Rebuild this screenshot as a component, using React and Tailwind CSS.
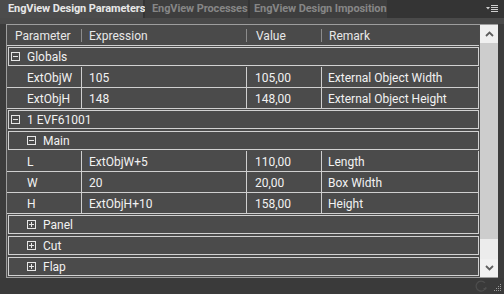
import React from "react";

const font = { fontFamily: 'Roboto, "Noto Sans", sans-serif' };

function BoxIcon({ plus }) {
  return (
    <svg width="9" height="9" viewBox="0 0 9 9" className="shrink-0">
      <rect x="0.5" y="0.5" width="8" height="8" fill="none" stroke="#e6e6e6" strokeWidth="1" />
      <line x1="2" y1="4.5" x2="7" y2="4.5" stroke="#e6e6e6" strokeWidth="1" />
      {plus && <line x1="4.5" y1="2" x2="4.5" y2="7" stroke="#e6e6e6" strokeWidth="1" />}
    </svg>
  );
}

function GroupRow({ label, level, plus }) {
  return (
    <div className="h-[21px] pt-px pl-px">
      <div
        className={`h-[19px] border border-[#d2d2d2] flex items-center gap-[7px] ${level ? "pl-[18px]" : "pl-[2px]"}`}
      >
        <BoxIcon plus={plus} />
        <span className="text-[12px] leading-none text-[#f2f2f2] pt-px">{label}</span>
      </div>
    </div>
  );
}

function DataRow({ p, e, v, r }) {
  const cell = "h-full border-r border-b border-[#cfcfcf] flex items-center pt-px text-[12px] text-[#f2f2f2] leading-none";
  return (
    <div className="h-[21px] flex">
      <div className={`${cell} w-[75px] pl-[20px]`}>{p}</div>
      <div className={`${cell} w-[165px] pl-[7px]`}>{e}</div>
      <div className={`${cell} w-[75px] pl-[8px]`}>{v}</div>
      <div className={`${cell} w-[157px] pl-[6px]`}>{r}</div>
    </div>
  );
}

export default function App() {
  return (
    <div className="w-[504px] h-[294px] bg-[#3b3b3b] flex flex-col overflow-hidden" style={font}>
      {/* Tab strip */}
      <div className="h-[18px] flex bg-[#343434] shrink-0">
        <div className="w-[143px] bg-[#4c4c4c] flex items-center pl-[8px] pt-px text-[11px] font-bold text-[#e8e8e8] whitespace-nowrap tracking-[-0.1px]">
          EngView Design Parameters
        </div>
        <div className="w-[2px]" />
        <div className="w-[103px] bg-[#3e3e3e] flex items-center pl-[7px] pt-px text-[11px] font-bold text-[#868686] whitespace-nowrap tracking-[-0.1px]">
          EngView Processes
        </div>
        <div className="w-[2px]" />
        <div className="w-[137px] bg-[#3e3e3e] flex items-center pl-[4px] pt-px text-[11px] font-bold text-[#868686] whitespace-nowrap tracking-[-0.1px]">
          EngView Design Imposition
        </div>
        <div className="flex-1 flex items-center justify-end pr-[6px]">
          <svg width="12" height="8" viewBox="0 0 12 8">
            <path d="M0 2 L4 2 L2 4.5 Z" fill="#d0d0d0" />
            <rect x="5" y="0" width="7" height="1" fill="#d0d0d0" />
            <rect x="5" y="2" width="7" height="1" fill="#d0d0d0" />
            <rect x="5" y="4" width="7" height="1" fill="#d0d0d0" />
            <rect x="5" y="6" width="7" height="1" fill="#d0d0d0" />
          </svg>
        </div>
      </div>
      <div className="h-[6px] bg-[#4a4a4a] shrink-0" />
      {/* Grid area */}
      <div className="flex shrink-0">
        <div className="w-[6px] bg-[#3c3c3c]" />
        <div className="w-[492px] h-[254px] border-l border-t border-b border-[#9e9e9e] flex bg-[#4b4b4b]">
          <div className="w-[472px] flex flex-col overflow-hidden">
            {/* Header */}
            <div className="h-[21px] shrink-0 flex border-b border-[#cfcfcf] bg-[#4a4a4a] text-[12px] text-[#e8e8e8] leading-none">
              <div className="w-[75px] flex items-center pl-[8px] pt-px relative">
                Parameter
                <span className="absolute right-[0px] top-[4px] h-[13px] w-px bg-[#8c8c8c]" />
              </div>
              <div className="w-[165px] flex items-center pl-[7px] pt-px relative">
                Expression
                <span className="absolute right-[0px] top-[4px] h-[13px] w-px bg-[#8c8c8c]" />
              </div>
              <div className="w-[75px] flex items-center pl-[9px] pt-px relative">
                Value
                <span className="absolute right-[0px] top-[4px] h-[13px] w-px bg-[#8c8c8c]" />
              </div>
              <div className="w-[157px] flex items-center pl-[7px] pt-px">Remark</div>
            </div>
            <GroupRow label="Globals" level={0} />
            <DataRow p="ExtObjW" e="105" v="105,00" r="External Object Width" />
            <DataRow p="ExtObjH" e="148" v="148,00" r="External Object Height" />
            <GroupRow label="1 EVF61001" level={0} />
            <GroupRow label="Main" level={1} />
            <DataRow p="L" e="ExtObjW+5" v="110,00" r="Length" />
            <DataRow p="W" e="20" v="20,00" r="Box Width" />
            <DataRow p="H" e="ExtObjH+10" v="158,00" r="Height" />
            <GroupRow label="Panel" level={1} plus />
            <GroupRow label="Cut" level={1} plus />
            <GroupRow label="Flap" level={1} plus />
          </div>
          <div className="w-px" />
          {/* Scrollbar */}
          <div className="w-[18px] flex flex-col bg-[#ececec]">
            <div className="h-[18px] bg-[#f0f0f0] flex items-center justify-center">
              <svg width="9" height="6" viewBox="0 0 9 6">
                <path d="M1 5 L4.5 1.5 L8 5" fill="none" stroke="#5e5e5e" strokeWidth="1.8" />
              </svg>
            </div>
            <div className="h-[196px] bg-[#cdcdcd]" />
            <div className="flex-1" />
            <div className="h-[18px] bg-[#f0f0f0] flex items-center justify-center">
              <svg width="9" height="6" viewBox="0 0 9 6">
                <path d="M1 1 L4.5 4.5 L8 1" fill="none" stroke="#5e5e5e" strokeWidth="1.8" />
              </svg>
            </div>
          </div>
        </div>
        <div className="w-[6px] bg-[#3c3c3c]" />
      </div>
      {/* Bottom strip */}
      <div className="flex-1 bg-[#3a3a3a] flex items-center justify-end pr-[2px] gap-[6px]">
        <svg width="14" height="14" viewBox="0 0 14 14">
          <path d="M11 4 A5 5 0 1 0 12 8" fill="none" stroke="#4e4e4e" strokeWidth="1.2" />
          <path d="M9 9 L13 9 L11 11 Z" fill="#4e4e4e" />
        </svg>
        <svg width="8" height="8" viewBox="0 0 8 8" className="self-end mb-[2px]">
          {[
            [6, 0], [6, 2], [4, 2], [6, 4], [4, 4], [2, 4], [6, 6], [4, 6], [2, 6], [0, 6],
          ].map(([x, y], i) => (
            <rect key={i} x={x} y={y} width="1" height="1" fill="#9a9a9a" />
          ))}
        </svg>
      </div>
    </div>
  );
}
